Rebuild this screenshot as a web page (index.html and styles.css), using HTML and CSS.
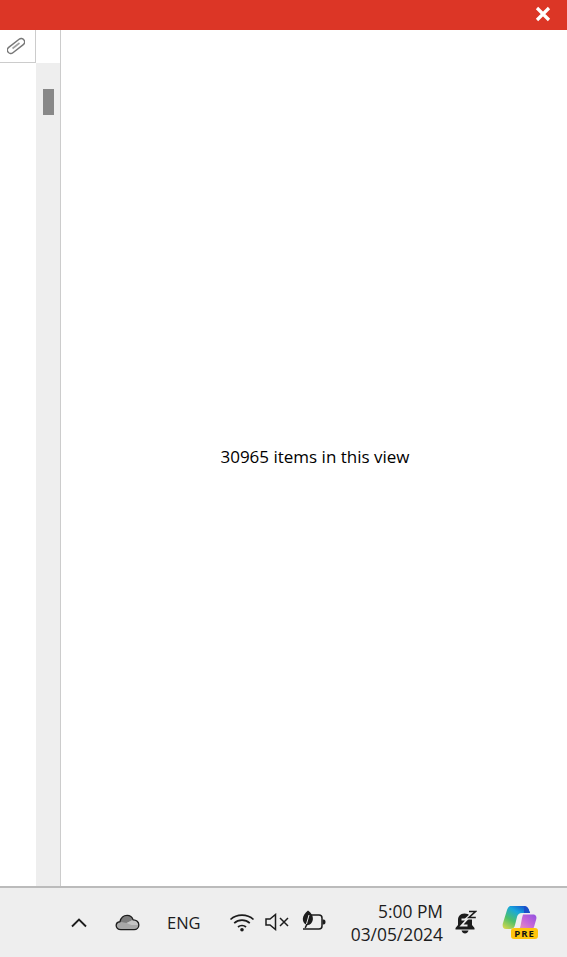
FILE: index.html

```html
<!DOCTYPE html>
<html lang="en">
<head>
    <meta charset="UTF-8">
    <meta name="viewport" content="width=device-width, initial-scale=1.0">
    <title>Items view</title>
    <link rel="stylesheet" href="styles.css">
</head>
<body>
    <header class="titlebar">
        <svg class="close-icon" width="16" height="16" viewBox="0 0 16 16">
            <path d="M2 2L14 14M14 2L2 14" stroke="#fff" stroke-width="3.2" fill="none"/>
        </svg>
    </header>

    <main class="content">
        <div class="column-list">
            <div class="attach-cell">
                <svg width="18" height="18" viewBox="0 0 18 18" fill="none" stroke="#777">
                    <rect x="-3.4" y="-10" width="6.800" height="20" rx="3.400" transform="translate(9 9) rotate(52)" stroke-width="1.500"/>
                    <path d="M5.500 11.500L12.500 6" stroke="#a0a0a0" stroke-width="1.600"/>
                </svg>
            </div>
        </div>
        <div class="scroll-column">
            <div class="scroll-head"></div>
            <div class="scroll-track">
                <div class="scroll-thumb"></div>
            </div>
        </div>
        <div class="view-pane">
            <p class="item-count">30965 items in this view</p>
        </div>
    </main>

    <footer class="taskbar">
        <svg class="tray-chevron" width="18" height="11" viewBox="0 0 18 11" fill="none" stroke="#1c1c1c" stroke-width="1.900">
            <path d="M2 9.500L9 2.500L16 9.500"/>
        </svg>

        <svg class="tray-cloud" width="25" height="17" viewBox="0 0 26 18">
            <path d="M6 16.500C3 16.500 1 14.600 1 12.300C1 10 2.800 8.400 5 8.200C6 4.200 9.200 1.500 12.600 1.500C15.600 1.500 18 3.400 19 6.200C22.400 6.200 25 8.600 25 11.600C25 14.400 22.800 16.500 20 16.500Z" fill="#a8a8a8"/>
            <path d="M5 8.200C6 4.200 9.200 1.500 12.600 1.500C15.600 1.500 18 3.400 19 6.200L12 9.500Z" fill="#7c7c7c"/>
            <path d="M12 9.500L19 6.200C22.400 6.200 25 8.600 25 11.600H17Z" fill="#c4c4c4"/>
            <path d="M6 16.500C3 16.500 1 14.600 1 12.300C1 10 2.800 8.400 5 8.200C6 4.200 9.200 1.500 12.600 1.500C15.600 1.500 18 3.400 19 6.200C22.400 6.200 25 8.600 25 11.600C25 14.400 22.800 16.500 20 16.500Z" fill="none" stroke="#1c1c1c" stroke-width="1.400"/>
        </svg>

        <span class="tray-lang">ENG</span>

        <svg class="tray-wifi" width="26" height="20" viewBox="0 0 26 20" fill="none" stroke="#1c1c1c" stroke-width="1.700">
            <path d="M1.500 7.500C7.800 1.600 18.200 1.600 24.500 7.500"/>
            <path d="M5.200 11.200C9.600 7.200 16.400 7.200 20.800 11.200"/>
            <path d="M9 15C11.200 13 14.800 13 17 15"/>
            <circle cx="13" cy="17.800" r="1.800" fill="#1c1c1c" stroke="none"/>
        </svg>

        <svg class="tray-volume" width="25" height="18" viewBox="0 0 25 18" fill="none" stroke="#1c1c1c" stroke-width="1.500">
            <path d="M1 6H5L10.500 1.500V16.500L5 12H1Z"/>
            <path d="M15 5L23 13M23 5L15 13"/>
        </svg>

        <svg class="tray-battery" width="26" height="21" viewBox="0 0 26 21">
            <path d="M10 5H19C21 5 22 6 22 8V16C22 18 21 19 19 19H3" fill="none" stroke="#1c1c1c" stroke-width="1.500"/>
            <path d="M22.500 9.500H23.500C25 9.500 25.500 10.500 25.500 12C25.500 13.500 25 14.500 23.500 14.500H22.500Z" fill="#1c1c1c"/>
            <path d="M8 0.500C11.500 3 13.500 6.500 12.800 10C12.200 13 10 15 7.500 15L5.800 18.200L4.500 17.500L6 14.500C1.500 12 1.500 5.500 8 0.500Z" fill="#1c1c1c"/>
            <path d="M9 5L6.500 14" stroke="#eee" stroke-width="1" fill="none"/>
        </svg>

        <div class="tray-clock">
            <span>5:00 PM</span>
            <span>03/05/2024</span>
        </div>

        <svg class="tray-bell" width="22" height="24" viewBox="0 0 22 24">
            <path d="M9.500 3.500C5 3.500 3 6.500 3 10V15L0.500 18V19.500H19.500V18L17 15V10C17 6.500 14 3.500 9.500 3.500Z" fill="#1c1c1c"/>
            <path d="M6.500 20.500H13.500C13 22.500 11.500 23.500 10 23.500C8.500 23.500 7 22.500 6.500 20.500Z" fill="#1c1c1c"/>
            <path d="M6.500 9.500H12L6.500 15.500H12.500" fill="none" stroke="#eee" stroke-width="1.800"/>
            <path d="M14 1.500H20.500L14 7.500H20.800" fill="none" stroke="#eee" stroke-width="4"/>
            <path d="M14 1.500H20.500L14 7.500H20.800" fill="none" stroke="#1c1c1c" stroke-width="1.600"/>
        </svg>

        <div class="copilot">
            <svg width="35" height="26" viewBox="0 0 35 26">
                <defs>
                    <linearGradient id="copilotLeft" x1="0" y1="1" x2="0.7" y2="0">
                        <stop offset="0" stop-color="#e6d94a"/>
                        <stop offset="0.4" stop-color="#4fc068"/>
                        <stop offset="0.75" stop-color="#18a8dc"/>
                        <stop offset="1" stop-color="#1460d0"/>
                    </linearGradient>
                    <linearGradient id="copilotRight" x1="0" y1="1" x2="1" y2="0">
                        <stop offset="0" stop-color="#f0a0b0"/>
                        <stop offset="0.5" stop-color="#c868d8"/>
                        <stop offset="1" stop-color="#9050e0"/>
                    </linearGradient>
                </defs>
                <path d="M9 1H22C24 1 25.500 2 26.500 4L28 8H20C17 8 15.500 10 15 12L13 20C12.500 22.500 11 24 8 24H4C1 24 0 21 1 18L5 5C5.800 2.500 7 1 9 1Z" fill="url(#copilotLeft)"/>
                <path d="M22 1C24 1 25.500 2 26.500 4L28 8H22Z" fill="#1a4fc8"/>
                <path d="M21 9.500H31C33.500 9.500 35 11.500 34.300 14L32 22C31.400 24 30 25 28 25H15C17 25 18 23 18.500 21L20 13Z" fill="url(#copilotRight)"/>
            </svg>
            <span class="copilot-badge">PRE</span>
        </div>
    </footer>
</body>
</html>
```

FILE: styles.css

```css
* {
    box-sizing: border-box;
}
body {
    margin: 0;
    height: 957px;
    overflow: hidden;
    display: flex;
    flex-direction: column;
    background: #fff;
    font-family: "Open Sans", "Noto Sans", sans-serif;
    color: #000;
}
.titlebar {
    height: 30px;
    flex: none;
    background: #dc3626;
    display: flex;
    align-items: center;
    justify-content: flex-end;
    padding: 0 16px 3px 0;
}
.close-icon {
    display: block;
}
.content {
    flex: 1;
    display: flex;
    min-height: 0;
}
.column-list {
    width: 36px;
    flex: none;
}
.attach-cell {
    height: 33px;
    border-right: 1px solid #ccc;
    border-bottom: 1px solid #ccc;
    display: flex;
    align-items: center;
    justify-content: center;
    padding-right: 4px;
}
.scroll-column {
    width: 25px;
    flex: none;
    display: flex;
    flex-direction: column;
    border-right: 1px solid #ccc;
}
.scroll-head {
    height: 33px;
    flex: none;
}
.scroll-track {
    flex: 1;
    background: #eee;
    padding: 26px 0 0 7px;
}
.scroll-thumb {
    width: 11px;
    height: 26px;
    background: #888;
}
.view-pane {
    flex: 1;
    display: flex;
    align-items: center;
    justify-content: center;
    padding-left: 2px;
}
.item-count {
    margin: 0 0 4px;
    font-size: 17px;
}
.taskbar {
    height: 71px;
    flex: none;
    background: #eee;
    border-top: 2px solid #bbb;
    display: flex;
    align-items: center;
    padding: 0 0 1px 70px;
    color: #1c1c1c;
}
.taskbar svg {
    display: block;
    flex: none;
}
.tray-cloud {
    margin-left: 27px;
}
.tray-lang {
    margin-left: 27px;
    width: 35px;
    font-size: 16.500px;
}
.tray-wifi {
    margin-left: 27px;
}
.tray-volume {
    margin-left: 10px;
}
.tray-battery {
    margin-left: 10px;
    margin-top: -4px;
}
.tray-clock {
    width: 117px;
    display: flex;
    flex-direction: column;
    align-items: flex-end;
    gap: 1px;
    font-size: 17.400px;
    line-height: 22px;
}
.tray-bell {
    margin-left: 12px;
}
.copilot {
    position: relative;
    margin-left: 25px;
    margin-top: -8px;
}
.copilot-badge {
    position: absolute;
    left: 9px;
    top: 23px;
    width: 27px;
    height: 11px;
    background: #ffc40c;
    border-radius: 3px;
    color: #111;
    font-size: 9.500px;
    font-weight: 700;
    letter-spacing: 1px;
    line-height: 11px;
    text-align: center;
}
```
